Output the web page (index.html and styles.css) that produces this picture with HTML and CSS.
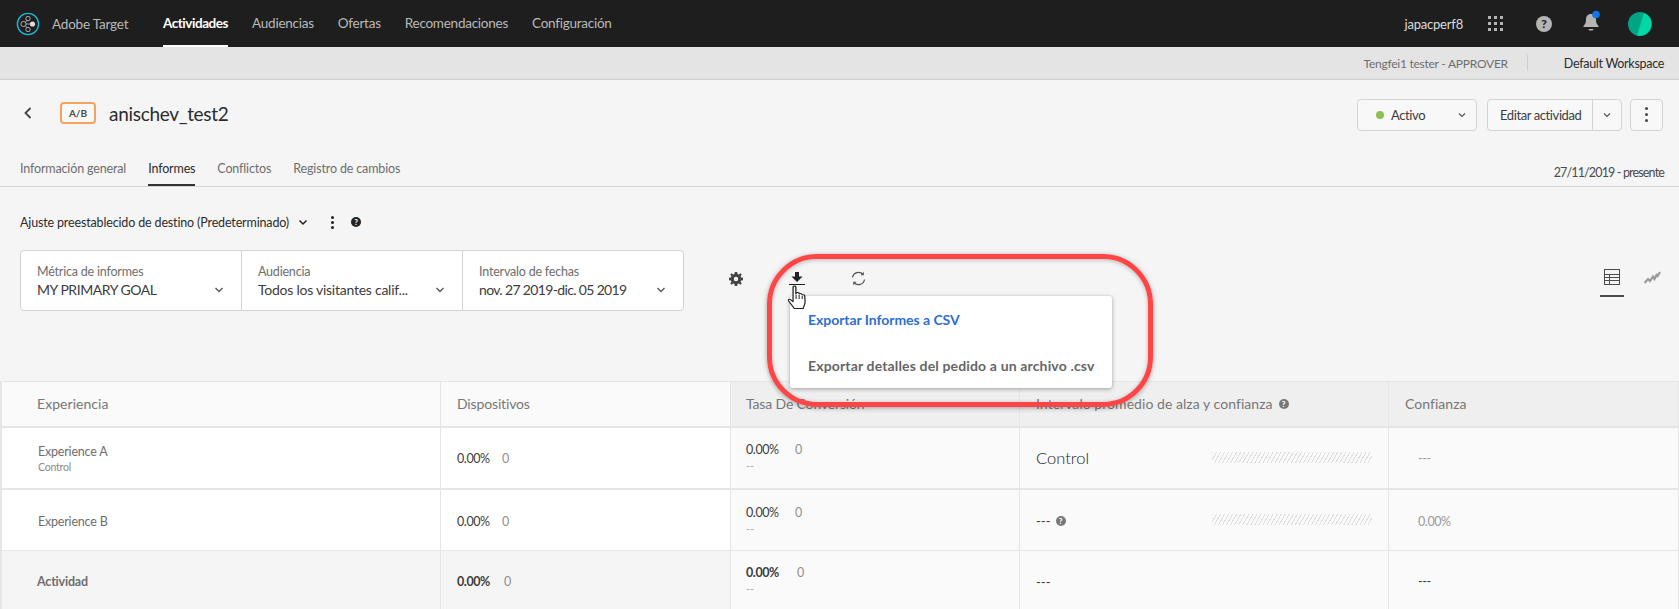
FILE: index.html
```html
<!DOCTYPE html>
<html>
<head>
<meta charset="UTF-8">
<title>Adobe Target</title>
<link rel="stylesheet" href="styles.css">
</head>
<body>
<div class="page">

  <header class="topbar">
    <svg class="logo" width="24" height="24" viewBox="0 0 24 24">
      <circle cx="12" cy="12" r="10.6" fill="none" stroke="#1fb6d6" stroke-width="1.4"/>
      <g fill="none" stroke="#c8c8c8" stroke-width=".8">
        <circle cx="7.5" cy="12" r="2.6"/>
        <circle cx="12" cy="6.5" r="2.2"/>
        <circle cx="12" cy="17.5" r="2.2"/>
        <path d="M9.5 10.4l1.4-2.2M9.5 13.6l1.4 2.2M10 12h4"/>
      </g>
      <circle cx="16.5" cy="12" r="2.6" fill="#ddd"/>
    </svg>
    <span class="brand">Adobe Target</span>
    <nav class="mainnav">
      <a class="mainnav-item active">Actividades</a>
      <a class="mainnav-item">Audiencias</a>
      <a class="mainnav-item">Ofertas</a>
      <a class="mainnav-item">Recomendaciones</a>
      <a class="mainnav-item">Configuración</a>
    </nav>
    <div class="topbar-right">
      <span class="username">japacperf8</span>
      <svg class="apps" width="16" height="16" viewBox="0 0 16 16" fill="#b4b4b4">
        <rect x="0" y="0" width="3" height="3"/><rect x="6" y="0" width="3" height="3"/><rect x="12" y="0" width="3" height="3"/>
        <rect x="0" y="6" width="3" height="3"/><rect x="6" y="6" width="3" height="3"/><rect x="12" y="6" width="3" height="3"/>
        <rect x="0" y="12" width="3" height="3"/><rect x="6" y="12" width="3" height="3"/><rect x="12" y="12" width="3" height="3"/>
      </svg>
      <span class="help-dot help-top">?</span>
      <svg class="bell" width="20" height="24" viewBox="0 0 20 24">
        <path d="M9 4c-3.5 0-5 2.600-5 5.500 0 3.500-1 5-2.500 6.500v1h15v-1c-1.500-1.500-2.500-3-2.500-6.500C14 6.600 12.500 4 9 4z" fill="#b4b4b4"/>
        <path d="M6.500 19h5c0 1-1 1.500-2.500 1.500S6.500 20 6.500 19z" fill="#b4b4b4"/>
        <circle cx="14" cy="4.500" r="3.800" fill="#1473e6"/>
      </svg>
      <svg class="avatar" width="24" height="24" viewBox="0 0 24 24">
        <circle cx="12" cy="12" r="12" fill="#00a684"/>
        <path d="M16 1A12 12 0 0 1 12 24 L9 23.500z" fill="#00d8a8"/>
      </svg>
    </div>
  </header>

  <div class="subbar">
    <span class="role">Tengfei1 tester - APPROVER</span>
    <span class="workspace">Default Workspace</span>
  </div>

  <div class="titlerow">
    <svg class="back" width="10" height="14" viewBox="0 0 10 14"><path d="M7.500 2L2.500 7l5 5" fill="none" stroke="#444" stroke-width="1.800"/></svg>
    <span class="badge">A/B</span>
    <h1 class="title">anischev_test2</h1>
    <div class="actions">
      <div class="btn btn-status">
        <i class="status-dot"></i><span>Activo</span>
        <svg class="chev chev-push" width="8" height="6" viewBox="0 0 8 6"><path d="M1 1.500l3 3 3-3" fill="none" stroke="#555" stroke-width="1.200"/></svg>
      </div>
      <div class="btn btn-edit">
        <span class="btn-edit-label">Editar actividad</span>
        <span class="btn-edit-caret"><svg class="chev" width="8" height="6" viewBox="0 0 8 6"><path d="M1 1.500l3 3 3-3" fill="none" stroke="#555" stroke-width="1.200"/></svg></span>
      </div>
      <div class="btn btn-more"><i></i><i></i><i></i></div>
    </div>
  </div>

  <div class="tabrow">
    <a class="tab">Información general</a>
    <a class="tab active">Informes</a>
    <a class="tab">Conflictos</a>
    <a class="tab">Registro de cambios</a>
    <span class="daterange">27/11/2019 - presente</span>
  </div>

  <div class="presetrow">
    <span>Ajuste preestablecido de destino (Predeterminado)</span>
    <svg class="preset-chev" width="10" height="7" viewBox="0 0 10 7"><path d="M1.500 1.500l3.500 3.500 3.500-3.500" fill="none" stroke="#222" stroke-width="1.500"/></svg>
    <span class="dots-v"><i></i><i></i><i></i></span>
    <span class="help-dot help-small dark">?</span>
  </div>

  <div class="toolrow">
    <div class="filters">
      <div class="filter">
        <span class="filter-label">Métrica de informes</span>
        <span class="filter-value filter-caps">MY PRIMARY GOAL</span>
        <svg class="filter-chev" width="10" height="6" viewBox="0 0 10 6"><path d="M1.500 1l3.500 3.500L8.500 1" fill="none" stroke="#555" stroke-width="1.300"/></svg>
      </div>
      <div class="filter">
        <span class="filter-label">Audiencia</span>
        <span class="filter-value">Todos los visitantes calif...</span>
        <svg class="filter-chev" width="10" height="6" viewBox="0 0 10 6"><path d="M1.500 1l3.500 3.500L8.500 1" fill="none" stroke="#555" stroke-width="1.300"/></svg>
      </div>
      <div class="filter">
        <span class="filter-label">Intervalo de fechas</span>
        <span class="filter-value filter-date">nov. 27 2019-dic. 05 2019</span>
        <svg class="filter-chev" width="10" height="6" viewBox="0 0 10 6"><path d="M1.500 1l3.500 3.500L8.500 1" fill="none" stroke="#555" stroke-width="1.300"/></svg>
      </div>
    </div>

    <svg class="tool-gear" width="14" height="14" viewBox="0 0 14 14">
      <path d="M5.800 0h2.400l.4 1.900 1.200.5L11.500 1.300l1.200 1.200-1.100 1.700.5 1.200 1.900.4v2.400l-1.900.4-.5 1.200 1.100 1.700-1.200 1.200-1.700-1.100-1.200.5-.4 1.900H5.800l-.4-1.900-1.200-.5-1.700 1.100-1.200-1.200 1.100-1.700-.5-1.200L0 8.200V5.800l1.900-.4.500-1.200L1.300 2.500l1.200-1.200 1.700 1.100 1.200-.5z" fill="#444"/>
      <circle cx="7" cy="7" r="2.200" fill="#f5f5f5"/>
    </svg>
    <svg class="tool-download" width="16" height="17" viewBox="0 0 16 17">
      <path d="M6 3h4v4.500h3.500L8 13 2.500 7.500H6z" fill="#222"/>
      <rect x="0" y="15" width="16" height="1" fill="#222"/>
    </svg>
    <svg class="tool-refresh" width="15" height="15" viewBox="0 0 15 15" fill="none" stroke="#555" stroke-width="1.200">
      <path d="M1.500 6.500A6 6 0 0 1 12 3.500"/>
      <path d="M13.500 8.500A6 6 0 0 1 3 11.500"/>
      <path d="M12.800 .8v3.400H9.600z" fill="#555" stroke="none"/>
      <path d="M2.200 14.200v-3.400h3.200z" fill="#555" stroke="none"/>
    </svg>

    <div class="views">
      <span class="view active">
        <svg width="16" height="16" viewBox="0 0 16 16" fill="none" stroke="#4b4b4b" stroke-width="1">
          <rect x=".5" y=".5" width="15" height="15"/>
          <path d="M.5 5.500h15M.5 8.500h15M.5 11.500h15M5.500 5.500v10"/>
        </svg>
      </span>
      <span class="view">
        <svg width="17" height="14" viewBox="0 0 17 14" fill="none" stroke="#999" stroke-width="2.200">
          <path d="M.5 12l3.500-4 2 2 3-4.500 1.500 2.500 2-4 1 1L16 1"/>
        </svg>
      </span>
    </div>
  </div>

  <div class="report">
    <div class="cell head c1 head-wide">Experiencia</div>
    <div class="cell head c2">Dispositivos</div>
    <div class="cell head c3">Tasa De Conversión</div>
    <div class="cell head c3 head-wide">Intervalo promedio de alza y confianza <span class="help-dot help-small grey">?</span></div>
    <div class="cell head c3 head-wide">Confianza</div>

    <div class="cell row1 c1 name"><span>Experience A</span><small>Control</small></div>
    <div class="cell row1 c2 pct"><b>0.00%</b><em>0</em></div>
    <div class="cell row1 c3 rate"><div class="pct"><b>0.00%</b><em>0</em></div><small>--</small></div>
    <div class="cell row1 c3 lift"><span class="lift-big">Control</span><span class="hatch"></span></div>
    <div class="cell row1 c3 conf">---</div>

    <div class="cell row2 c1 name"><span>Experience B</span></div>
    <div class="cell row2 c2 pct"><b>0.00%</b><em>0</em></div>
    <div class="cell row2 c3 rate"><div class="pct"><b>0.00%</b><em>0</em></div><small>--</small></div>
    <div class="cell row2 c3 lift"><span class="lift-dash">---</span><span class="help-dot help-small grey">?</span><span class="hatch"></span></div>
    <div class="cell row2 c3 conf">0.00%</div>

    <div class="cell row3 c1t name"><strong>Actividad</strong></div>
    <div class="cell row3 c1t pct total"><b>0.00%</b><em>0</em></div>
    <div class="cell row3 c3 rate total"><div class="pct"><b>0.00%</b><em>0</em></div><small>--</small></div>
    <div class="cell row3 c3 lift"><span class="lift-dash">---</span></div>
    <div class="cell row3 c3 conf dark">---</div>
  </div>

  <!-- export menu sits over the table -->
  <div class="menu">
    <a class="menu-item hover">Exportar Informes a CSV</a>
    <a class="menu-item">Exportar detalles del pedido a un archivo .csv</a>
  </div>
  <div class="callout"></div>
  <svg class="cursor" width="19" height="25" viewBox="1 0 15 25" preserveAspectRatio="none">
    <path d="M5 2c0-1.300 2.200-1.300 2.200 0v7l.3-1c.5-.8 2-.6 2.200.3l.1.7c.4-.8 2-.6 2.200.4l.1.600c.5-.6 2-.4 2.100.6l.3 6c0 3-1 4-1.500 7H6c-1-2-3-5-4.500-7.500-.8-1.300.4-2.300 1.500-1.500l2 2z" fill="#fff" stroke="#222" stroke-width="1" stroke-linejoin="round"/>
    <path d="M7.400 10v4M9.800 10v4M12.200 11v3" stroke="#222" stroke-width=".8"/>
  </svg>

</div>
</body>
</html>
```

FILE: styles.css
```css
* {
  box-sizing: border-box;
}

html, body {
  margin: 0;
  padding: 0;
}

body {
  font-family: "Lato", "Open Sans", sans-serif;
  font-size: 14px;
  color: #4b4b4b;
  background: #f5f5f5;
}

.page {
  position: relative;
  width: 1679px;
  height: 609px;
  overflow: hidden;
}

/* top bar */
.topbar {
  display: flex;
  align-items: center;
  height: 47px;
  padding-left: 16px;
  background: #1e1e1e;
  color: #b9b9b9;
}

.brand {
  margin-left: 12px;
  width: 111px;
  font-size: 13.500px;
  letter-spacing: -.2px;
}

.mainnav {
  display: flex;
  gap: 24px;
  align-self: stretch;
}

.mainnav-item {
  display: flex;
  align-items: center;
  height: 47px;
  border-bottom: 2px solid transparent;
  font-size: 13.500px;
  letter-spacing: -.25px;
}

.mainnav-item.active {
  color: #fff;
  font-weight: 700;
  letter-spacing: -.45px;
  border-bottom-color: #fff;
}

.topbar-right {
  display: flex;
  align-items: center;
  margin-left: auto;
  padding-right: 27px;
}

.username {
  color: #dcdcdc;
  font-size: 13px;
  letter-spacing: -.2px;
}

.apps {
  margin-left: 25px;
}

.help-dot {
  display: inline-flex;
  align-items: center;
  justify-content: center;
  border-radius: 50%;
  font-weight: 900;
}

.help-top {
  width: 16px;
  height: 16px;
  margin-left: 32px;
  background: #b4b4b4;
  color: #1e1e1e;
  font-size: 12px;
}

.help-small {
  width: 10px;
  height: 10px;
  font-size: 8px;
  color: #f5f5f5;
}

.help-small.dark {
  background: #222;
}

.help-small.grey {
  background: #777;
  color: #fff;
}

.bell {
  margin: 0 0 4px 30px;
}

.avatar {
  margin-left: 26px;
}

/* workspace strip */
.subbar {
  display: flex;
  align-items: center;
  justify-content: flex-end;
  height: 33px;
  padding-right: 15px;
  background: #e4e4e4;
  border-bottom: 1px solid #d0d0d0;
  font-size: 12.500px;
}

.role {
  padding-right: 19px;
  margin-top: 1px;
  font-size: 12px;
  color: #6e6e6e;
  letter-spacing: -.25px;
}

.workspace {
  display: flex;
  align-items: center;
  height: 16px;
  padding-left: 36px;
  border-left: 1px solid #cfcfcf;
  color: #2c2c2c;
  letter-spacing: -.3px;
}

/* title */
.titlerow {
  display: flex;
  align-items: center;
  height: 66px;
  padding: 0 16px 0 23px;
}

.badge {
  display: flex;
  align-items: center;
  justify-content: center;
  width: 36px;
  height: 22px;
  margin-left: 27px;
  border: 2px solid #f5a35c;
  border-radius: 4px;
  font-size: 10px;
  font-weight: 700;
  color: #4b4b4b;
  background: #f8f8f8;
}

.title {
  margin: 0 0 0 13px;
  font-size: 19px;
  font-weight: 400;
  color: #2c2c2c;
  letter-spacing: -.3px;
}

.actions {
  display: flex;
  gap: 8px;
  margin-left: auto;
  margin-top: 3px;
  font-size: 13px;
  letter-spacing: -.4px;
}

.btn {
  display: flex;
  align-items: center;
  height: 32px;
  background: #f8f8f8;
  border: 1px solid #d3d3d3;
  border-radius: 4px;
  color: #3c3c3c;
}

.btn-status {
  width: 120px;
  margin-right: 2px;
  padding: 0 10px 0 18px;
}

.status-dot {
  width: 8px;
  height: 8px;
  margin-right: 7px;
  border-radius: 50%;
  background: #8cc152;
}

.chev-push {
  margin-left: auto;
}

.btn-edit {
  width: 135px;
}

.btn-edit-label {
  flex: 1;
  padding-left: 12px;
}

.btn-edit-caret {
  display: flex;
  align-items: center;
  justify-content: center;
  width: 29px;
  height: 100%;
  border-left: 1px solid #d3d3d3;
}

.btn-more {
  flex-direction: column;
  justify-content: center;
  gap: 3px;
  width: 33px;
}

.btn-more i,
.dots-v i {
  display: block;
  width: 3px;
  height: 3px;
  border-radius: 50%;
  background: #444;
}

/* tabs */
.tabrow {
  display: flex;
  align-items: stretch;
  gap: 22px;
  height: 41px;
  padding: 0 15px 0 20px;
  border-bottom: 1px solid #d5d5d5;
  font-size: 12.500px;
}

.tab {
  display: flex;
  align-items: center;
  height: 40px;
  padding-top: 4px;
  color: #6e6e6e;
  letter-spacing: -.15px;
}

.tab.active {
  color: #2c2c2c;
  border-bottom: 2px solid #333;
  padding-top: 6px;
}

.daterange {
  display: flex;
  align-items: center;
  margin-left: auto;
  padding-top: 12px;
  font-size: 12.500px;
  letter-spacing: -.85px;
  color: #4b4b4b;
}

/* preset */
.presetrow {
  display: flex;
  align-items: center;
  height: 63px;
  padding: 7px 0 0 20px;
  font-size: 12.500px;
  color: #2c2c2c;
  letter-spacing: -.15px;
}

.preset-chev {
  margin-left: 9px;
}

.dots-v {
  display: flex;
  flex-direction: column;
  gap: 2px;
  margin-left: 23px;
}

.dots-v i {
  background: #222;
}

.presetrow .help-dot {
  margin-left: 17px;
}

/* filters + toolbar */
.toolrow {
  display: flex;
  align-items: flex-start;
  height: 131px;
  padding-left: 20px;
}

.filters {
  display: flex;
  width: 664px;
  height: 61px;
  background: #fff;
  border: 1px solid #d3d3d3;
  border-radius: 4px;
}

.filter {
  position: relative;
  display: flex;
  flex-direction: column;
  flex: 0 0 221px;
  padding: 12px 0 0 16px;
  border-left: 1px solid #d3d3d3;
}

.filter:first-child {
  flex-basis: 220px;
  border-left: 0;
}

.filter-label {
  font-size: 12.500px;
  line-height: 17px;
  color: #6e6e6e;
  letter-spacing: -.2px;
}

.filter-value {
  font-size: 14px;
  line-height: 19px;
  color: #3c3c3c;
  letter-spacing: -.25px;
}

.filter-caps {
  letter-spacing: -.45px;
}

.filter-date {
  letter-spacing: -.65px;
}

.filter-chev {
  position: absolute;
  top: 36px;
  right: 17px;
}

.tool-gear {
  margin: 22px 0 0 45px;
}

.tool-download {
  margin: 19px 0 0 46px;
}

.tool-refresh {
  margin: 21px 0 0 46px;
}

.views {
  display: flex;
  gap: 20px;
  margin-left: auto;
  padding-right: 18px;
  margin-top: 19px;
}

.view {
  display: flex;
  justify-content: center;
  height: 28px;
  width: 24px;
  padding-top: 0;
}

.view.active {
  border-bottom: 2px solid #4b4b4b;
}

.view + .view {
  width: 17px;
  padding-top: 2px;
}

/* report table */
.report {
  display: grid;
  grid-template-columns: 439px 290px 289px 369px 290px;
  grid-template-rows: 46px 62px 61px 58px;
  border-top: 1px solid #e6e6e6;
  border-left: 2px solid #e6e6e6;
  font-size: 13px;
}

.cell {
  display: flex;
  align-items: center;
  border-right: 1px solid #e6e6e6;
  color: #6e6e6e;
}

.head {
  padding-bottom: 1px;
  border-bottom: 2px solid #e6e6e6;
  font-size: 14px;
  color: #777;
  letter-spacing: -.15px;
}

.head-wide {
  letter-spacing: .05px;
}

.head.c1 { padding-left: 35px; background: #fafafa; }
.head.c2 { padding-left: 16px; background: #fafafa; }
.head.c3 { padding-left: 15px; background: #efefef; }
.head.c3 + .head.c3 { padding-left: 16px; }
.head.c3:last-child { padding-left: 24px; }

.head .help-dot {
  margin-left: 6px;
}

.row1 { border-bottom: 2px solid #e6e6e6; }
.row2 { border-bottom: 1px solid #e6e6e6; padding-top: 2px; }
.row3 { padding-top: 3px; }

.c1 { background: #fff; }
.c2 { background: #fff; }
.c3 { background: #fafafa; }
.c1t { background: #f5f5f5; }

.name {
  flex-direction: column;
  align-items: flex-start;
  justify-content: center;
  padding-left: 36px;
  font-size: 12.500px;
  letter-spacing: -.2px;
}

.name small {
  margin-top: 2px;
  font-size: 10.500px;
  color: #888;
}

.name strong {
  font-size: 12.500px;
  margin-left: -1px;
}

.pct {
  display: flex;
  align-items: center;
  padding-left: 16px;
  font-size: 12.500px;
  letter-spacing: -.4px;
}

.pct b {
  width: 45px;
  font-weight: 400;
  color: #3c3c3c;
}

.pct em {
  font-style: normal;
  color: #909090;
}

.total b {
  font-weight: 700;
  width: 47px;
}

.rate {
  flex-direction: column;
  align-items: flex-start;
  justify-content: center;
  padding-bottom: 2px;
}

.rate .pct {
  padding-left: 15px;
}

.rate .pct b {
  width: 49px;
}

.rate.total .pct b {
  width: 51px;
}

.rate small {
  padding: 2px 0 0 15px;
  font-size: 11px;
  line-height: 14px;
  color: #aaa;
}

.lift {
  position: relative;
  padding-left: 16px;
}

.lift-big {
  font-size: 16.500px;
  font-weight: 300;
  color: #222;
}

.lift-dash {
  color: #3c3c3c;
  font-size: 13px;
}

.lift .help-dot {
  margin-left: 5px;
}

.hatch {
  position: absolute;
  top: 24px;
  left: 192px;
  width: 160px;
  height: 11px;
  background: repeating-linear-gradient(120deg, #dedede 0 1px, transparent 1px 3.500px);
}

.conf {
  padding-left: 29px;
  font-size: 12.500px;
  color: #999;
  letter-spacing: -.4px;
}

.conf.dark {
  color: #3c3c3c;
}

/* overlays */
.menu {
  position: absolute;
  left: 790px;
  top: 296px;
  width: 322px;
  height: 92px;
  background: #fff;
  border-radius: 3px;
  box-shadow: 0 1px 4px rgba(0, 0, 0, .35);
}

.menu-item {
  display: flex;
  align-items: center;
  height: 46px;
  padding-left: 18px;
  font-weight: 700;
  font-size: 14px;
  color: #666;
  letter-spacing: .15px;
}

.menu-item.hover {
  color: #2d6fd2;
  letter-spacing: -.05px;
}

.callout {
  position: absolute;
  left: 767px;
  top: 254px;
  width: 386px;
  height: 153px;
  border: 5px solid #ff4545;
  border-radius: 50px;
  box-shadow: 0 1px 5px rgba(0, 0, 0, .35), inset 0 1px 4px rgba(0, 0, 0, .25);
}

.cursor {
  position: absolute;
  left: 788px;
  top: 285px;
}
```
